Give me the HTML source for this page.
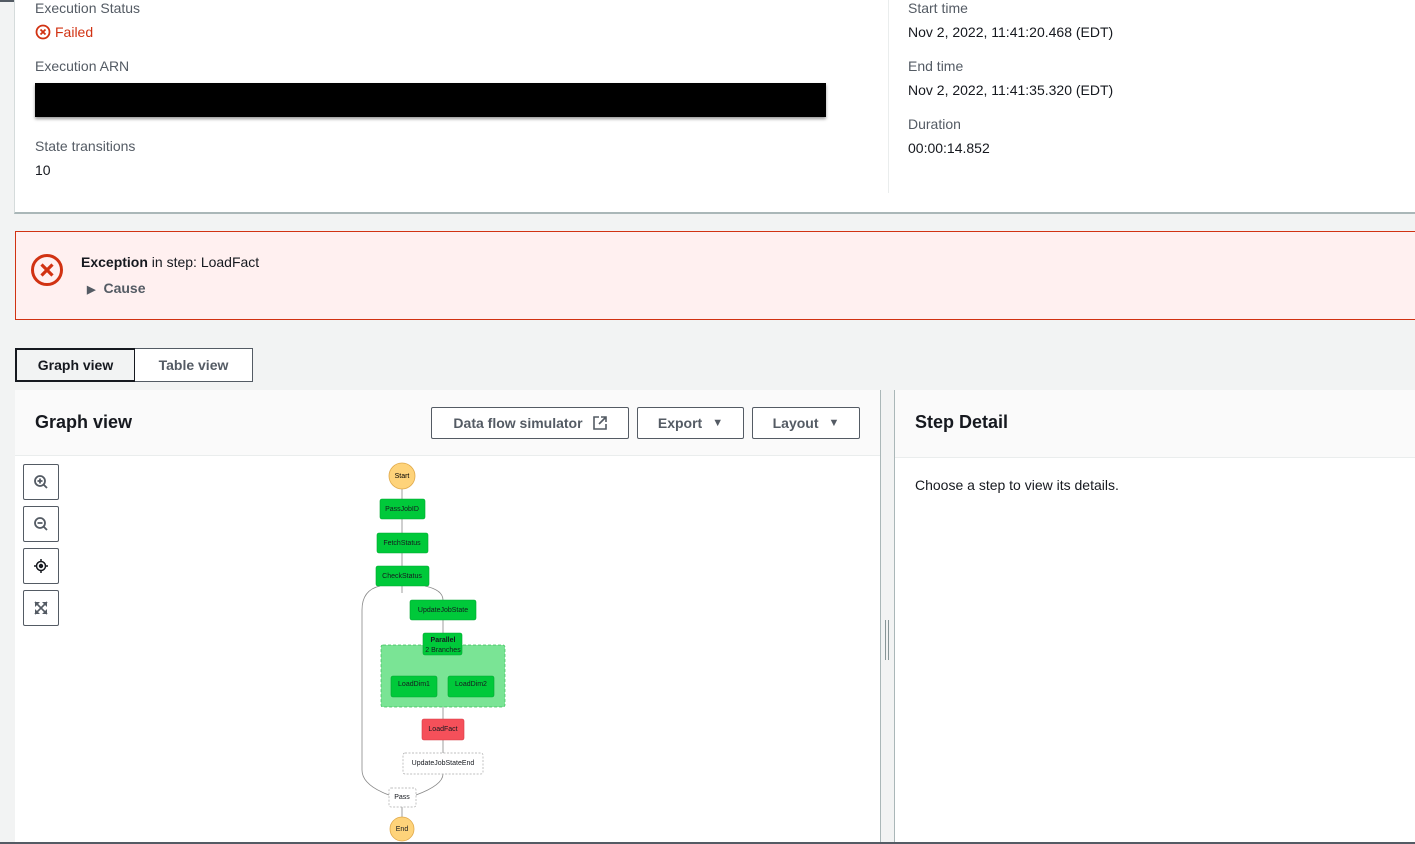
<!DOCTYPE html>
<html><head><meta charset="utf-8"><style>
*{box-sizing:border-box;margin:0;padding:0}
body{width:1415px;height:844px;overflow:hidden;background:#f2f3f3;font-family:"Liberation Sans",sans-serif;color:#16191f;position:relative;font-size:14px}
.abs{position:absolute}
.lbl{color:#545b64;font-size:14px}
.val{font-size:14px;color:#16191f}
.btn{position:absolute;top:407px;height:32px;border:1px solid #545b64;background:#fff;font-weight:bold;color:#545b64;font-size:14px;display:flex;align-items:center;justify-content:center;gap:10px;border-radius:2px}
.zb{position:absolute;left:23px;width:36px;height:36px;border:1px solid #545b64;background:#fff;border-radius:2px}
</style></head><body>
<div class="abs" style="left:0;top:0;width:1415px;height:2px;background:#545b64"></div>
<div class="abs" style="left:14px;top:0;width:1401px;height:214px;background:#fff;border-left:1px solid #d5dbdb;border-bottom:2px solid #aab7b8"></div>
<div class="abs" style="left:888px;top:0;width:1px;height:193px;background:#eaeded"></div>
<div class="abs lbl" style="left:35px;top:0">Execution Status</div>
<div class="abs" style="left:35px;top:24px;color:#d13212;font-size:14px;display:flex;align-items:center;gap:4px">
<svg width="16" height="16" viewBox="0 0 16 16"><circle cx="8" cy="8" r="6.5" fill="none" stroke="#d13212" stroke-width="1.8"/><path d="M5.5 5.5L10.5 10.5M10.5 5.5L5.5 10.5" stroke="#d13212" stroke-width="1.8"/></svg>Failed</div>
<div class="abs lbl" style="left:35px;top:58px">Execution ARN</div>
<div class="abs" style="left:35px;top:83px;width:791px;height:34px;background:#000;box-shadow:0 2px 3px rgba(0,0,0,.4)"></div>
<div class="abs lbl" style="left:35px;top:138px">State transitions</div>
<div class="abs val" style="left:35px;top:162px">10</div>
<div class="abs lbl" style="left:908px;top:0">Start time</div>
<div class="abs val" style="left:908px;top:24px">Nov 2, 2022, 11:41:20.468 (EDT)</div>
<div class="abs lbl" style="left:908px;top:58px">End time</div>
<div class="abs val" style="left:908px;top:82px">Nov 2, 2022, 11:41:35.320 (EDT)</div>
<div class="abs lbl" style="left:908px;top:116px">Duration</div>
<div class="abs val" style="left:908px;top:140px">00:00:14.852</div>

<div class="abs" style="left:15px;top:231px;width:1400px;height:89px;background:#fff0f0;border:1px solid #d13212;border-right:none"></div>
<svg class="abs" style="left:30px;top:253px" width="34" height="34" viewBox="0 0 34 34"><circle cx="17" cy="17" r="14.5" fill="none" stroke="#d13212" stroke-width="3"/><path d="M11.5 11.5L22.5 22.5M22.5 11.5L11.5 22.5" stroke="#d13212" stroke-width="3.2"/></svg>
<div class="abs" style="left:81px;top:254px"><b>Exception</b> in step: LoadFact</div>
<div class="abs" style="left:87px;top:280px;font-weight:bold;color:#545b64"><span style="font-size:11px;margin-right:8px">&#9654;</span>Cause</div>

<div class="abs" style="left:15px;top:348px;width:121px;height:34px;background:#f2f3f3;border:2px solid #16191f;font-weight:bold;color:#16191f;display:flex;align-items:center;justify-content:center">Graph view</div>
<div class="abs" style="left:135px;top:348px;width:118px;height:34px;background:#fff;border:1px solid #545b64;border-left:none;font-weight:bold;color:#545b64;display:flex;align-items:center;justify-content:center">Table view</div>

<div class="abs" style="left:15px;top:390px;width:866px;height:454px;background:#fff;border-right:1px solid #aab7b8"></div>
<div class="abs" style="left:15px;top:390px;width:865px;height:66px;background:#fafafa;border-bottom:1px solid #eaeded"></div>
<div class="abs" style="left:35px;top:412px;font-size:18px;font-weight:bold">Graph view</div>
<div class="btn" style="left:431px;width:198px">Data flow simulator <svg width="14" height="14" viewBox="0 0 14 14"><path d="M6 1H1v12h12V8M8 1h5v5M13 1L6 8" fill="none" stroke="#545b64" stroke-width="1.6"/></svg></div>
<div class="btn" style="left:637px;width:107px">Export <span style="font-size:11px">&#9660;</span></div>
<div class="btn" style="left:752px;width:108px">Layout <span style="font-size:11px">&#9660;</span></div>

<div class="zb" style="top:464px"><svg width="34" height="34" viewBox="0 0 34 34"><circle cx="16" cy="16" r="5" fill="none" stroke="#545b64" stroke-width="1.8"/><path d="M19.5 19.5L23 23M13.5 16h5M16 13.5v5" stroke="#545b64" stroke-width="1.8"/></svg></div>
<div class="zb" style="top:506px"><svg width="34" height="34" viewBox="0 0 34 34"><circle cx="16" cy="16" r="5" fill="none" stroke="#545b64" stroke-width="1.8"/><path d="M19.5 19.5L23 23M13.5 16h5" stroke="#545b64" stroke-width="1.8"/></svg></div>
<div class="zb" style="top:548px"><svg width="34" height="34" viewBox="0 0 34 34"><circle cx="17" cy="17" r="4.5" fill="none" stroke="#16191f" stroke-width="1.5"/><circle cx="17" cy="17" r="2.2" fill="#16191f"/><path d="M17 10v3M17 21v3M10 17h3M21 17h3" stroke="#16191f" stroke-width="1.5"/></svg></div>
<div class="zb" style="top:590px"><svg width="34" height="34" viewBox="0 0 34 34"><path d="M11 11h5l-5 5zM23 11v5l-5-5zM11 23v-5l5 5zM23 23h-5l5-5z" fill="#545b64"/><path d="M11 11l12 12M23 11L11 23" stroke="#545b64" stroke-width="1.6"/></svg></div>

<svg class="abs" style="left:0;top:0" width="880" height="844" font-family="Liberation Sans,sans-serif" font-size="7" text-anchor="middle">
<g stroke="#888" stroke-width="0.8" fill="none">
<path d="M402 489V499M402 519V533M402 553V566M402 586V593"/>
<path d="M425 586Q443 590 443 600"/>
<path d="M380 586Q362 590 362 610V770Q362 785 389 795"/>
<path d="M443 620V633M443 655Q443 663 415 666V676M443 655Q443 663 471 666V676M443 707V719M443 740V753M443 774Q443 785 416 795M402 807V817"/>
</g>
<rect x="381" y="645" width="124" height="62" rx="2" fill="#7ae495" stroke="#3bbf5a" stroke-dasharray="3 2" stroke-width="0.7"/>
<circle cx="402" cy="476" r="13" fill="#fed37a" stroke="#e0a94a" stroke-width="0.8"/>
<text x="402" y="478">Start</text>
<g fill="#00c93a" stroke="#00a830" stroke-width="0.6">
<rect x="380" y="499" width="45" height="20" rx="2"/>
<rect x="377" y="533" width="51" height="20" rx="2"/>
<rect x="376" y="566" width="53" height="20" rx="2"/>
<rect x="410" y="600" width="66" height="20" rx="2"/>
<rect x="423" y="633" width="39" height="22" rx="2"/>
<rect x="391" y="676" width="46" height="21" rx="2"/>
<rect x="448" y="676" width="46" height="21" rx="2"/>
</g>
<rect x="422" y="719" width="42" height="21" rx="2" fill="#f5505a" stroke="#d63a44" stroke-width="0.6"/>
<rect x="403" y="753" width="80" height="21" rx="2" fill="#fff" stroke="#aaa" stroke-dasharray="2 1.5" stroke-width="0.7"/>
<rect x="389" y="788" width="27" height="19" rx="2" fill="#fff" stroke="#aaa" stroke-dasharray="2 1.5" stroke-width="0.7"/>
<circle cx="402" cy="829" r="12" fill="#fed37a" stroke="#e0a94a" stroke-width="0.8"/>
<g fill="#16191f">
<text x="402" y="511">PassJobID</text>
<text x="402" y="545">FetchStatus</text>
<text x="402" y="578">CheckStatus</text>
<text x="443" y="612">UpdateJobState</text>
<text x="443" y="642" font-weight="bold">Parallel</text>
<text x="443" y="652">2 Branches</text>
<text x="414" y="686">LoadDim1</text>
<text x="471" y="686">LoadDim2</text>
<text x="443" y="731">LoadFact</text>
<text x="443" y="765">UpdateJobStateEnd</text>
<text x="402" y="799">Pass</text>
<text x="402" y="831">End</text>
</g>
</svg>

<div class="abs" style="left:885px;top:620px;width:1px;height:40px;background:#879596"></div>
<div class="abs" style="left:888px;top:620px;width:1px;height:40px;background:#879596"></div>

<div class="abs" style="left:894px;top:390px;width:521px;height:454px;background:#fff;border-left:1px solid #aab7b8"></div>
<div class="abs" style="left:895px;top:390px;width:520px;height:68px;background:#fafafa;border-bottom:1px solid #eaeded"></div>
<div class="abs" style="left:915px;top:412px;font-size:18px;font-weight:bold">Step Detail</div>
<div class="abs" style="left:915px;top:477px">Choose a step to view its details.</div>
<div class="abs" style="left:0;top:842px;width:1415px;height:2px;background:#545b64"></div>
</body></html>
